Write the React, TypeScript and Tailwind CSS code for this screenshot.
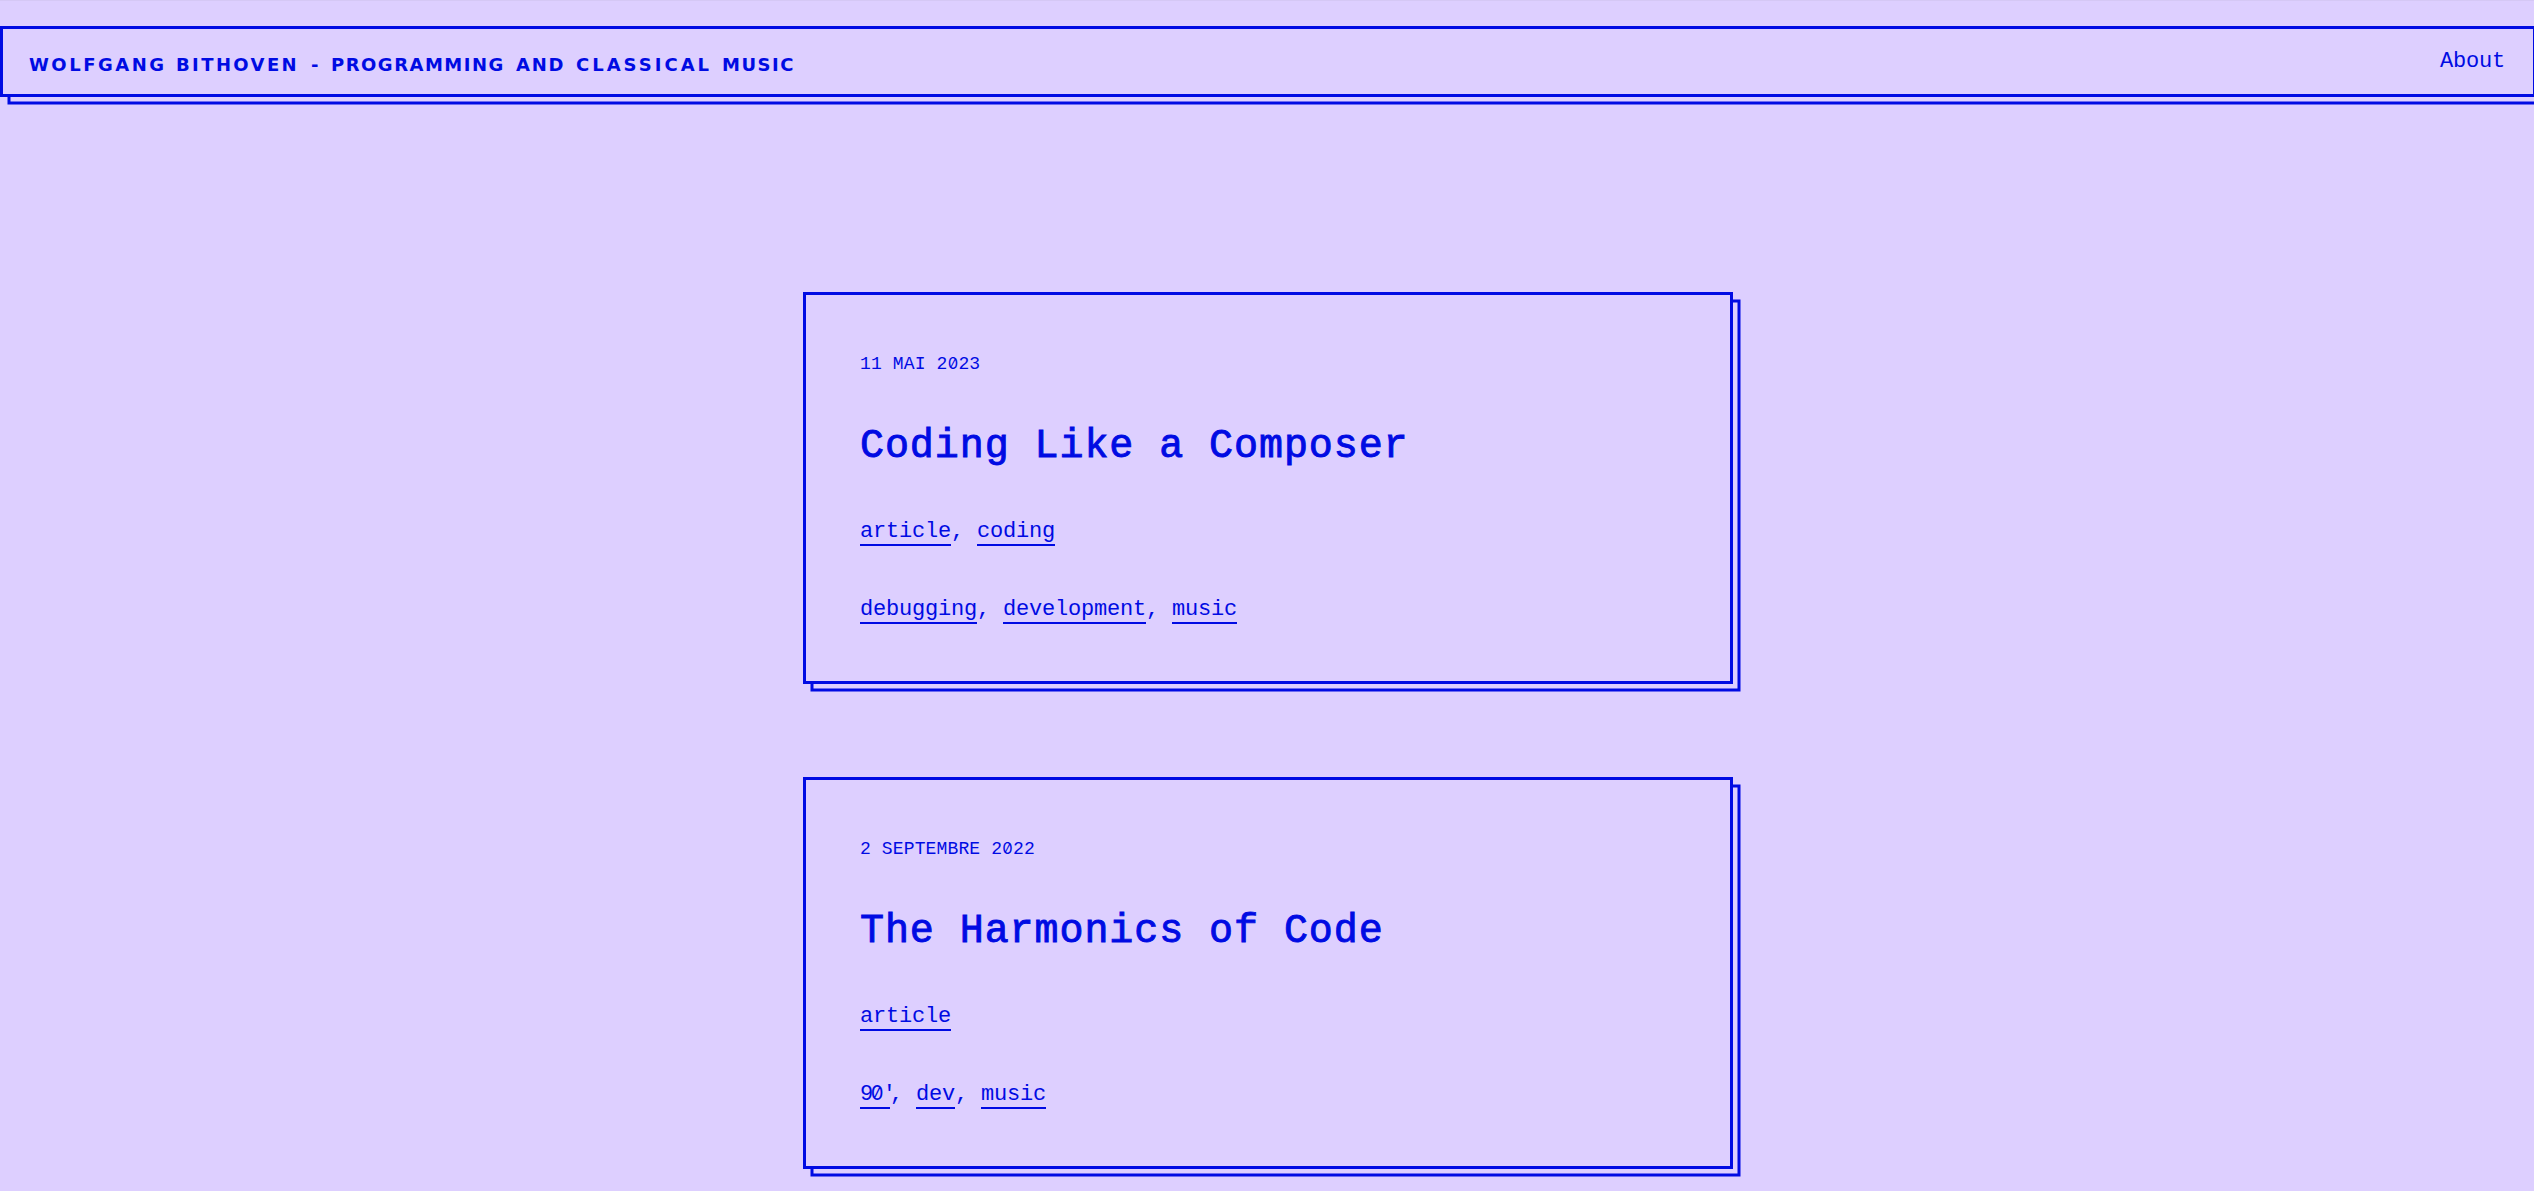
import React from "react";

type Post = { date: string; title: string; categories: string[]; tags: string[] };

const posts: Post[] = [
  {
    date: "11 mai 2023",
    title: "Coding Like a Composer",
    categories: ["article", "coding"],
    tags: ["debugging", "development", "music"],
  },
  {
    date: "2 septembre 2022",
    title: "The Harmonics of Code",
    categories: ["article"],
    tags: ["90'", "dev", "music"],
  },
];

const frame =
  "border-[3px] border-[#000be3] bg-[#ddcfff] shadow-[7.5px_7.5px_0_-3px_#ddcfff,7.5px_7.5px_0_0_#000be3]";

// Swaps the monospace zero for one with a slash, keeping the column width.
function Slashed({ text, cell }: { text: string; cell: string }) {
  return (
    <>
      {text.split(/(0)/).map((part, i) =>
        part === "0" ? (
          <span
            key={i}
            className={`inline-block text-center font-['Inter',sans-serif] text-[0.92em] leading-none font-normal tracking-normal slashed-zero ${cell}`}
          >
            0
          </span>
        ) : (
          part
        ),
      )}
    </>
  );
}

function Terms({ items }: { items: string[] }) {
  return (
    <p className="flex h-[28px] whitespace-pre text-[22px] leading-[28px] tracking-[-0.202px]">
      {items.map((item, i) => (
        <React.Fragment key={item}>
          <a
            href="#"
            className={
              item === "90'"
                ? "h-[28px] w-[30px] border-b-2 border-[#000be3] tracking-[-2.5px]"
                : "h-[28px] border-b-2 border-[#000be3]"
            }
          >
            <Slashed text={item} cell="w-[12px]" />
          </a>
          {i < items.length - 1 && <span>{", "}</span>}
        </React.Fragment>
      ))}
    </p>
  );
}

function Card({ post }: { post: Post }) {
  return (
    <article className={`h-[392px] w-[930px] pt-[57px] pl-[54px] ${frame}`}>
      <p className="h-[24px] text-[18px] leading-[24px] tracking-[0.13px] uppercase">
        <Slashed text={post.date} cell="w-[10.93px]" />
      </p>
      <h2 className="mt-[45px] mb-[45px] h-[52px] text-[40px] leading-[52px] tracking-[0.93px] whitespace-nowrap [-webkit-text-stroke:0.9px_#000be3]">
        {post.title}
      </h2>
      <div className="flex flex-col gap-[50px]">
        <Terms items={post.categories} />
        <Terms items={post.tags} />
      </div>
    </article>
  );
}

export default function App() {
  return (
    <div className="h-[1191px] w-full overflow-hidden border-t border-[#d5c8f5] bg-[#ddcfff] pt-[25px] font-['Liberation_Mono',monospace] text-[#000be3]">
      <header className={`flex h-[71px] w-[2536px] items-center justify-between pr-[28px] pl-[26px] ${frame}`}>
        <a
          href="#"
          className="flex pt-[6px] font-['DejaVu_Sans',sans-serif] text-[18px] leading-[24px] font-bold whitespace-nowrap uppercase"
        >
          <span className="w-[147px] tracking-[2.5px]">Wolfgang</span>
          <span className="w-[135px] tracking-[2.4px]">Bithoven</span>
          <span className="w-[20px]">-</span>
          <span className="w-[185px] tracking-[1.5px]">Programming</span>
          <span className="w-[60px] tracking-[1.8px]">and</span>
          <span className="w-[146px] tracking-[3px]">Classical</span>
          <span className="tracking-[1.5px]">Music</span>
        </a>
        <a href="#" className="pt-px text-[22px] leading-[26px] tracking-[-0.202px]">
          About
        </a>
      </header>
      <main className="flex flex-col gap-[93px] pt-[195px] pl-[803px]">
        {posts.map((post) => (
          <Card key={post.title} post={post} />
        ))}
      </main>
    </div>
  );
}
